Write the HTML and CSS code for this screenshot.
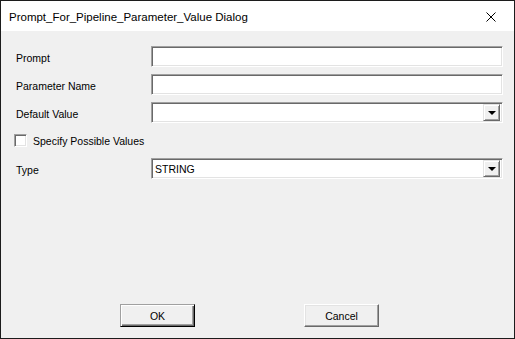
FILE: index.html
```html
<!DOCTYPE html>
<html lang="en">
<head>
    <meta charset="UTF-8">
    <title>Prompt_For_Pipeline_Parameter_Value Dialog</title>
    <link rel="stylesheet" href="styles.css">
</head>
<body>
    <div class="window">
        <header class="titlebar">
            <span class="title">Prompt_For_Pipeline_Parameter_Value Dialog</span>
            <button class="close-btn" aria-label="Close">
                <svg width="10" height="10" viewBox="0 0 10 10">
                    <path d="M0.5 0.5 L9.5 9.5 M9.5 0.5 L0.5 9.5" stroke="#000" stroke-width="1" fill="none"/>
                </svg>
            </button>
        </header>

        <main class="dialog-body">
            <div class="row">
                <label class="label">Prompt</label>
                <div class="field"></div>
            </div>
            <div class="row">
                <label class="label">Parameter Name</label>
                <div class="field"></div>
            </div>
            <div class="row">
                <label class="label">Default Value</label>
                <div class="field combo">
                    <span class="combo-value"></span>
                    <span class="drop-btn"><span class="arrow"></span></span>
                </div>
            </div>
            <div class="row check-row">
                <span class="checkbox"></span>
                <span class="check-label">Specify Possible Values</span>
            </div>
            <div class="row">
                <label class="label">Type</label>
                <div class="field combo">
                    <span class="combo-value">STRING</span>
                    <span class="drop-btn"><span class="arrow"></span></span>
                </div>
            </div>

            <footer class="buttons">
                <button class="btn btn-default">OK</button>
                <button class="btn">Cancel</button>
            </footer>
        </main>
    </div>
</body>
</html>
```

FILE: styles.css
```css
* {
    margin: 0;
    padding: 0;
    box-sizing: border-box;
}

body {
    font-family: 'Liberation Sans', Arial, sans-serif;
    font-size: 10.5px;
    color: #000;
    background: #f0f0f0;
}

.window {
    width: 515px;
    height: 339px;
    border: 1px solid #1c1c1c;
    background: #f0f0f0;
    display: flex;
    flex-direction: column;
}

.titlebar {
    height: 30px;
    background: #ffffff;
    display: flex;
    align-items: center;
    justify-content: space-between;
    padding-left: 8px;
}

.title {
    font-size: 11.5px;
    font-family: 'Liberation Sans', Arial, sans-serif;
    color: #000;
    padding-top: 2px;
}

.close-btn {
    width: 46px;
    height: 30px;
    border: none;
    background: none;
    display: flex;
    align-items: center;
    justify-content: center;
    padding-top: 1px;
}

.dialog-body {
    flex: 1;
    display: flex;
    flex-direction: column;
    padding: 15px 10px 0 15px;
}

.row {
    display: flex;
    align-items: center;
    height: 21px;
    margin-bottom: 7px;
}

.label {
    width: 135px;
    padding-top: 2px;
}

.field {
    width: 352px;
    height: 21px;
    background: #ffffff;
    border-top: 1px solid #a0a0a0;
    border-left: 1px solid #a0a0a0;
    border-right: 1px solid #ffffff;
    border-bottom: 1px solid #ffffff;
    box-shadow: inset 1px 1px 0 #696969, inset -1px -1px 0 #e3e3e3;
}

.combo {
    display: flex;
    align-items: center;
    justify-content: space-between;
    padding: 2px;
}

.combo-value {
    padding-left: 1px;
    padding-top: 1px;
}

.drop-btn {
    width: 17px;
    height: 17px;
    background: #f0f0f0;
    border-top: 1px solid #e3e3e3;
    border-left: 1px solid #e3e3e3;
    border-right: 1px solid #696969;
    border-bottom: 1px solid #696969;
    box-shadow: inset 1px 1px 0 #ffffff, inset -1px -1px 0 #a0a0a0;
    display: flex;
    align-items: center;
    justify-content: center;
}

.arrow {
    width: 0;
    height: 0;
    border-left: 4px solid transparent;
    border-right: 4px solid transparent;
    border-top: 4px solid #000;
    margin-top: 1px;
}

.checkbox {
    width: 13px;
    height: 13px;
    margin-left: -2px;
    background: #ffffff;
    border-top: 1px solid #a0a0a0;
    border-left: 1px solid #a0a0a0;
    border-right: 1px solid #ffffff;
    border-bottom: 1px solid #ffffff;
    box-shadow: inset 1px 1px 0 #696969, inset -1px -1px 0 #e3e3e3;
}

.check-label {
    margin-left: 6px;
    padding-top: 1px;
}

.buttons {
    margin-top: auto;
    display: flex;
    gap: 109px;
    padding-left: 104px;
    padding-bottom: 11px;
}

.btn {
    width: 75px;
    height: 23px;
    font-family: 'Liberation Sans', Arial, sans-serif;
    font-size: 10.5px;
    background: #f0f0f0;
    border-top: 1px solid #ffffff;
    border-left: 1px solid #ffffff;
    border-right: 1px solid #696969;
    border-bottom: 1px solid #696969;
    box-shadow: inset -1px -1px 0 #a0a0a0, inset 1px 1px 0 #e3e3e3;
    color: #000;
}

.btn-default {
    border: 1px solid #000;
    border-top-color: #a0a0a0;
    border-left-color: #a0a0a0;
    box-shadow: inset 1px 1px 0 #ffffff, inset -1px -1px 0 #696969, inset -2px -2px 0 #a0a0a0;
}
```
